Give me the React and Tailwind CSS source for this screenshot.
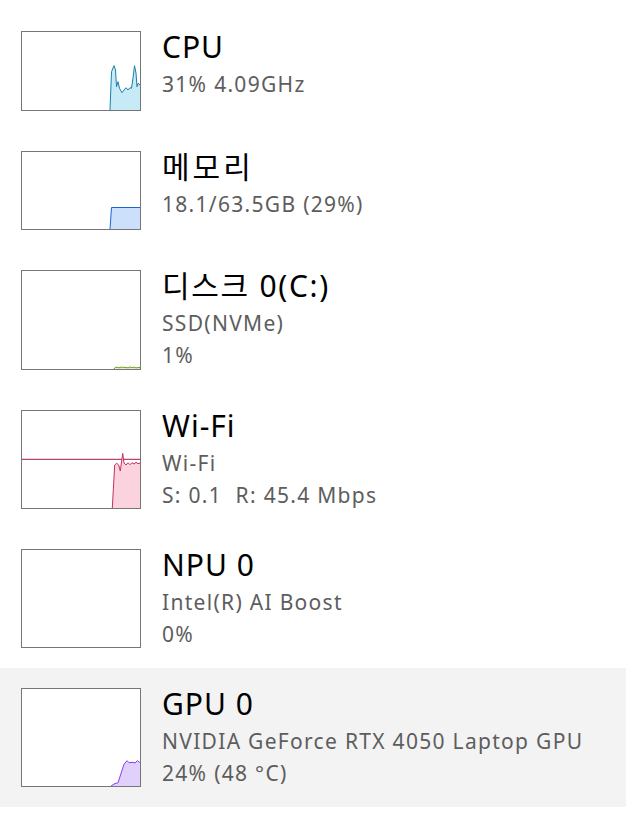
import React from 'react'

const rows = [
  {
    title: 'CPU',
    lines: ['31% 4.09GHz'],
    h: 'h-[80px]',
    vh: 78,
    stroke: '#1b7fa8',
    fill: '#c7eaf7',
    pts: '88,78 89.5,39.7 92,33.7 93.5,38 94.5,54.7 96,49.7 97.5,56.3 100,60.7 102,58 104,55.7 106,58 108,55.7 109.5,56.3 111,46 112.5,33.7 114,41 115,54.7 116,51.3 118,53',
  },
  {
    title: '메모리',
    track: 'tracking-[3px]',
    lines: ['18.1/63.5GB (29%)'],
    h: 'h-[79px]',
    vh: 77,
    stroke: '#1a64d2',
    fill: '#cce0fb',
    pts: '88,77 89.5,55.5 118,55.5',
  },
  {
    title: '디스크 0(C:)',
    track: 'tracking-[1.7px]',
    lines: ['SSD(NVMe)', '1%'],
    h: 'h-[100px]',
    vh: 98,
    stroke: '#6ea31e',
    fill: '#e4f1d1',
    pts: '92,98 93,96.6 95,96.2 97,96.8 99,96.2 103,96.4 106,96.8 108,96 110,96.6 112,96.2 114,96.9 116,96.5 118,96.6',
  },
  {
    title: 'Wi-Fi',
    lines: ['Wi-Fi', 'S: 0.1  R: 45.4 Mbps'],
    h: 'h-[99px]',
    vh: 97,
    stroke: '#c4305d',
    fill: '#fbd3df',
    line: 48.3,
    pts: '90.3,97 92.7,54 94.7,52.3 96.7,54 98.3,60 100.7,42.3 102,52 104,54 106,51.7 108,53.7 110,51.7 112,53 114,51.3 116,52.7 118,52',
  },
  {
    title: 'NPU 0',
    lines: ['Intel(R) AI Boost', '0%'],
    h: 'h-[99px]',
    vh: 97,
  },
  {
    title: 'GPU 0',
    lines: ['NVIDIA GeForce RTX 4050 Laptop GPU', '24% (48 °C)'],
    h: 'h-[99px]',
    vh: 97,
    stroke: '#8a3cf5',
    fill: '#e0d0fc',
    pts: '89,97 92,95 96,93.7 102,75.3 105,71.7 107,73.7 111,73.3 113,74 115.5,71.7 117.5,73.3 118,73',
    active: true,
  },
]

function Chart({ r }) {
  const first = r.pts ? r.pts.split(' ')[0].split(',')[0] : 0
  return (
    <div className={`w-[120px] ${r.h} shrink-0 border border-[#767676] bg-white`}>
      <svg className="block w-full h-full" viewBox={`0 0 118 ${r.vh}`} preserveAspectRatio="none">
        {r.line && <line x1="0" y1={r.line} x2="118" y2={r.line} stroke="#a8174c" strokeWidth="1" />}
        {r.pts && (
          <>
            <polygon points={`${r.pts} 118,${r.vh} ${first},${r.vh}`} fill={r.fill} />
            <polyline points={r.pts} fill="none" stroke={r.stroke} strokeWidth="1" strokeLinejoin="round" />
          </>
        )}
      </svg>
    </div>
  )
}

export default function App() {
  return (
    <div className="w-[639px] h-[816px] bg-white pt-[11px]" style={{ fontFamily: '"Noto Sans", "Noto Sans CJK KR", sans-serif' }}>
      {rows.map((r, i) => (
        <div key={i} className={`w-[626px] flex gap-[21px] pl-[21px] py-[20px] ${r.active ? 'bg-[#f3f3f3]' : ''}`}>
          <Chart r={r} />
          <div className="min-w-0 pt-[1px] -mb-[7px]">
            <div className={`text-[30px] leading-[29px] text-black whitespace-nowrap ${r.track || 'tracking-[1px]'}`}>{r.title}</div>
            <div className="mt-[8px]">
              {r.lines.map((l, j) => (
                <div key={j} className="text-[21px] leading-[31.5px] tracking-[1.3px] text-[#5d5d5d] whitespace-pre">{l}</div>
              ))}
            </div>
          </div>
        </div>
      ))}
    </div>
  )
}
